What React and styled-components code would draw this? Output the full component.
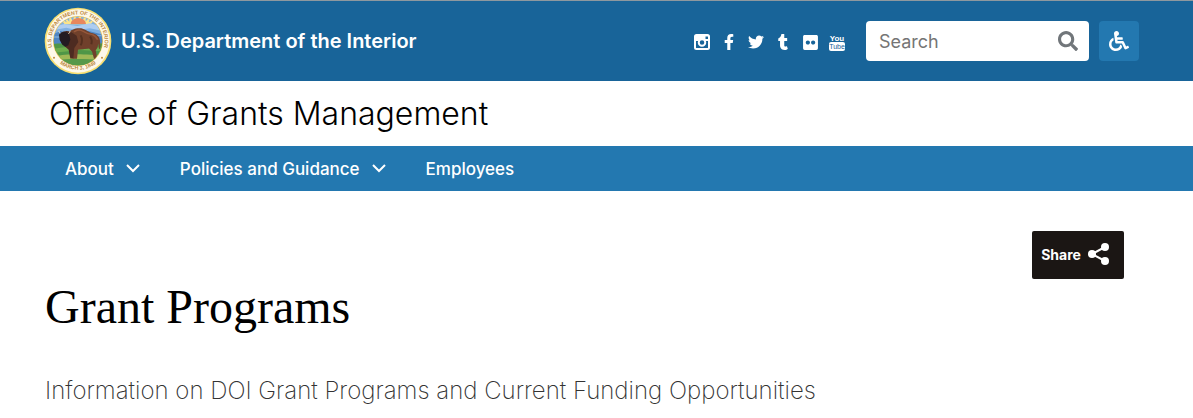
import React, { useState } from "react";
import styled, { createGlobalStyle } from "styled-components";
import {
  FaFacebookF,
  FaTwitter,
  FaTumblr,
  FaFlickr,
  FaSearch,
  FaWheelchair,
} from "react-icons/fa";

const menu = [
  { id: 1, name: "About", hasChildren: true },
  { id: 2, name: "Policies and Guidance", hasChildren: true },
  { id: 3, name: "Employees", hasChildren: false },
];

const InstagramIcon = () => (
  <svg width="16" height="16" viewBox="0 0 32 32" aria-hidden="true">
    <rect x="2" y="2" width="28" height="28" rx="3" fill="none" stroke="currentColor" strokeWidth="4" />
    <path fill="currentColor" d="M3 3h18v8h8v3h-6a9.500 9.500 0 0 0-14 0H3z" />
    <path fill="currentColor" d="M20 3h9v2h-6v5h6v4h-9z" />
    <circle cx="16" cy="17" r="6.500" fill="none" stroke="currentColor" strokeWidth="4" />
  </svg>
);

const YoutubeIcon = () => (
  <svg width="16" height="18" viewBox="0 0 16 18" aria-hidden="true">
    <YoutubeText x="8" y="8">
      You
    </YoutubeText>
    <rect x="0" y="9" width="16" height="9" rx="2" fill="currentColor" />
    <YoutubeText x="8" y="16" $dark>
      Tube
    </YoutubeText>
  </svg>
);

const ShareIcon = () => (
  <svg width="21" height="22" viewBox="0 0 21 22" aria-hidden="true">
    <path d="M17 4 4 11l13 7" fill="none" stroke="currentColor" strokeWidth="2" />
    <circle cx="17" cy="4" r="4" fill="currentColor" />
    <circle cx="4" cy="11" r="4" fill="currentColor" />
    <circle cx="17" cy="18" r="4" fill="currentColor" />
  </svg>
);

const social = [
  { name: "Instagram", icon: <InstagramIcon /> },
  { name: "Facebook", icon: <FaFacebookF size={16} /> },
  { name: "Twitter", icon: <FaTwitter size={16} /> },
  { name: "Tumblr", icon: <FaTumblr size={16} /> },
  { name: "Flickr", icon: <FaFlickr size={17} /> },
  { name: "YouTube", icon: <YoutubeIcon /> },
];

const Seal = () => (
  <svg width="68" height="68" viewBox="0 0 204 204" role="img" aria-label="Department of the Interior seal">
    <defs>
      <path id="seal-top" d="M38 150A80 80 0 1 1 166 150" />
      <path id="seal-bottom" d="M24 144A91 91 0 0 0 180 144" />
      <clipPath id="seal-scene">
        <circle cx="102" cy="102" r="73" />
      </clipPath>
    </defs>
    <circle cx="102" cy="102" r="100" fill="#f7df72" />
    <circle cx="102" cy="102" r="95" fill="#fdf8ea" />
    <circle cx="102" cy="102" r="75" fill="#ecc45a" />
    <g clipPath="url(#seal-scene)">
      <path fill="#7fb0e2" d="M20 20h164v80H20z" />
      <path fill="#fbe38a" d="m62 52-14-18 20 12-8-20 16 18-1-20 12 19 4-21 9 20 8-21 6 21 12-19-1 20 17-17-8 20 20-10-14 16z" />
      <path fill="#e8875d" d="M80 51a23 18 0 0 1 46 0z" />
      <path fill="#aecdf0" d="M25 60l36-9 39 6 38-8 45 12v12l-46-9-37 6-33-8-42 8z" />
      <path fill="#4f86c2" d="m24 112 2-30 24-10 24 8 60-8 24 6 28 8v24z" />
      <path fill="#79a9d8" d="M24 88h30v4H24zm120-4h40v4h-40z" />
      <path fill="#4f9647" d="M20 112c42-7 95 4 166-4v80H20z" />
      <path fill="#6fae4e" d="m24 126 43-6 48 7 64-8-6 14-64-4-80 8z" />
      <path fill="#9fb856" d="M34 148c32-9 102-8 138 0l-12 10H46z" />
      <path fill="#57994a" d="M44 160c27-5 82-5 118 0l-28 24H68z" />
      <g transform="translate(0 20) scale(1 .88)">
        <path fill="#70402b" d="M72 66c8-11 24-19 40-16 12 3 18 11 28 15 17 3 27 13 28 27l1 26-4 3-2-19-3 15-5 8 5 29h-10l-6-25-9-10-33 4-3 31H86l-1-30-14-12z" />
        <path fill="#4d2b21" d="M50 66c8-7 20-9 30-4l18 13 5 22-12 20-3 36h-9l-5-30-12-12-10-14z" />
        <path fill="#231c22" d="M45 72c5-10 20-14 30-4l4 20-6 20-9 5-9-7-8-16z" />
        <path fill="none" stroke="#f1e2c2" strokeWidth="3" d="M49 66q-5-2-4-8M73 68q6-3 5-9" />
        <path fill="none" stroke="#96573a" strokeWidth="5" d="M90 62q14-12 27-2t28 11q12 6 16 18" />
        <path fill="none" stroke="#55301f" strokeWidth="6" d="M110 74q8 16 0 34m28-30q8 12 4 26" />
      </g>
    </g>
    <SealText>
      <textPath href="#seal-top" startOffset="50%" textAnchor="middle">
        U.S. DEPARTMENT OF THE INTERIOR
      </textPath>
    </SealText>
    <SealText>
      <textPath href="#seal-bottom" startOffset="50%" textAnchor="middle">
        MARCH 3, 1849
      </textPath>
    </SealText>
    <circle cx="30" cy="152" r="3" fill="#c08a3e" />
    <circle cx="174" cy="152" r="3" fill="#c08a3e" />
  </svg>
);

const App = () => {
  const [keyword, setKeyword] = useState("");

  return (
    <>
      <GlobalStyle />
      <Header>
        <Brand href="#">
          <Seal />
          <span>U.S. Department of the Interior</span>
        </Brand>
        <Tools>
          <SocialList>
            {social.map((item) => (
              <li key={item.name}>
                <SocialLink href="#" aria-label={item.name}>
                  {item.icon}
                </SocialLink>
              </li>
            ))}
          </SocialList>
          <SearchForm role="search" onSubmit={(e) => e.preventDefault()}>
            <SearchInput
              type="text"
              aria-label="Search"
              placeholder="Search"
              value={keyword}
              onChange={(e) => setKeyword(e.target.value)}
            />
            <SearchButton type="submit" aria-label="Submit search">
              <FaSearch size={20} />
            </SearchButton>
          </SearchForm>
          <AccessButton type="button" aria-label="Accessibility">
            <FaWheelchair size={20} />
          </AccessButton>
        </Tools>
      </Header>
      <SiteName>Office of Grants Management</SiteName>
      <Nav aria-label="Main">
        {menu.map((item) =>
          item.hasChildren ? (
            <NavButton key={item.id} type="button" aria-expanded="false">
              {item.name}
              <Chevron viewBox="0 0 14 9" aria-hidden="true">
                <path d="m1 1 6 6 6-6" />
              </Chevron>
            </NavButton>
          ) : (
            <NavLink key={item.id} href="#">
              {item.name}
            </NavLink>
          )
        )}
      </Nav>
      <Main>
        <ShareButton type="button">
          Share
          <ShareIcon />
        </ShareButton>
        <Title>Grant Programs</Title>
        <Intro>Information on DOI Grant Programs and Current Funding Opportunities</Intro>
      </Main>
    </>
  );
};

export default App;

const GlobalStyle = createGlobalStyle`
  * {
    box-sizing: border-box;
  }

  body {
    margin: 0;
    background: #fff;
    color: #000;
    font-family: Inter, "Liberation Sans", sans-serif;
  }

  button, input {
    font-family: inherit;
  }
`;

const SealText = styled.text`
  font-family: "Liberation Sans", sans-serif;
  font-size: 16px;
  font-weight: 700;
  fill: #c08a3e;
`;

const YoutubeText = styled.text`
  font-family: "Liberation Sans Narrow", "Liberation Sans", sans-serif;
  font-size: ${(props) => (props.$dark ? "7px" : "8px")};
  font-weight: ${(props) => (props.$dark ? 400 : 700)};
  fill: ${(props) => (props.$dark ? "#186499" : "#fff")};
  text-anchor: middle;
`;

const Header = styled.header`
  display: flex;
  align-items: center;
  justify-content: space-between;
  height: 81px;
  padding: 0 54px 0 44px;
  border-top: 1px solid #8e989f;
  background: #186499;
`;

const Brand = styled.a`
  display: flex;
  align-items: center;
  gap: 9px;
  color: #fff;
  font-size: 20px;
  font-weight: 600;
  text-decoration: none;
  white-space: nowrap;
`;

const Tools = styled.div`
  display: flex;
  align-items: center;
`;

const SocialList = styled.ul`
  display: flex;
  align-items: center;
  gap: 3px;
  margin: 2px 17px 0 0;
  padding: 0;
  list-style: none;
`;

const SocialLink = styled.a`
  display: flex;
  align-items: center;
  justify-content: center;
  width: 24px;
  height: 24px;
  color: #fff;
`;

const SearchForm = styled.form`
  display: flex;
  width: 223px;
  height: 40px;
  margin-right: 10px;
  border-radius: 4px;
  background: #fff;
  overflow: hidden;
`;

const SearchInput = styled.input`
  flex: 1;
  min-width: 0;
  padding: 0 0 0 13px;
  border: 0;
  background: transparent;
  color: #333;
  font-size: 18px;

  &::placeholder {
    color: #757575;
  }
`;

const SearchButton = styled.button`
  display: flex;
  align-items: center;
  justify-content: center;
  width: 42px;
  padding: 0;
  border: 0;
  background: transparent;
  color: #71767a;
  cursor: pointer;
`;

const AccessButton = styled.button`
  display: flex;
  align-items: center;
  justify-content: center;
  width: 40px;
  height: 40px;
  padding: 0;
  border: 0;
  border-radius: 4px;
  background: #2378b0;
  color: #fff;
  cursor: pointer;
`;

const SiteName = styled.div`
  padding: 13px 49px 12px;
  font-size: 32px;
  font-weight: 300;
  line-height: 40px;
`;

const Nav = styled.nav`
  display: flex;
  align-items: center;
  gap: 40px;
  height: 45px;
  padding: 0 65px;
  background: #2378b0;
`;

const NavButton = styled.button`
  display: flex;
  align-items: center;
  gap: 12px;
  padding: 0;
  border: 0;
  background: transparent;
  color: #fff;
  font-size: 17px;
  font-weight: 500;
  line-height: 24px;
  cursor: pointer;
`;

const NavLink = styled.a`
  color: #fff;
  font-size: 17px;
  font-weight: 500;
  line-height: 24px;
  text-decoration: none;
`;

const Chevron = styled.svg`
  width: 14px;
  height: 9px;
  fill: none;
  stroke: currentColor;
  stroke-width: 2;
`;

const Main = styled.main`
  display: flex;
  flex-direction: column;
  padding: 40px 69px 0 45px;
`;

const ShareButton = styled.button`
  display: flex;
  align-items: center;
  align-self: flex-end;
  justify-content: center;
  gap: 7px;
  width: 92px;
  height: 48px;
  padding: 0 6px 2px 0;
  border: 0;
  border-radius: 2px;
  background: #1b1614;
  color: #fff;
  font-size: 14px;
  font-weight: 700;
  cursor: pointer;
`;

const Title = styled.h1`
  margin: 0;
  font-family: "Liberation Serif", serif;
  font-size: 48px;
  font-weight: 400;
  line-height: 56px;
`;

const Intro = styled.p`
  margin: 40px 0 0;
  color: #333;
  font-size: 24px;
  font-weight: 200;
  line-height: 32px;
`;
